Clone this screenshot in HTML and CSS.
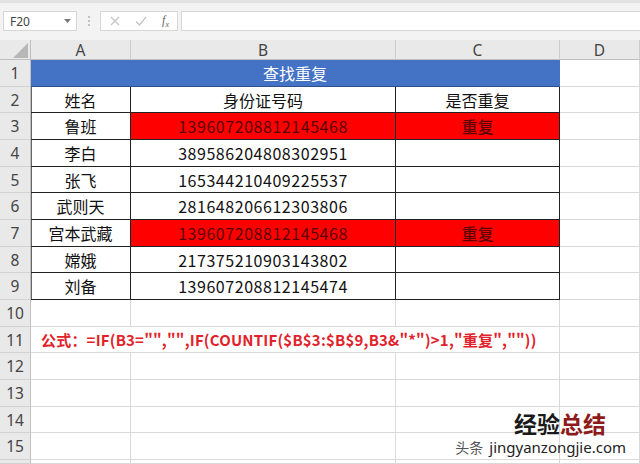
FILE: index.html
```
<!DOCTYPE html>
<html lang="zh-CN">
<head>
<meta charset="utf-8">
<title>查找重复</title>
<link rel="stylesheet" href="styles.css">
</head>
<body>
<div class="app">
  <div class="topstrip"></div>
  <div class="toolbar">
    <div class="namebox"><span>F20</span><svg class="dd" width="7" height="4" viewBox="0 0 7 4"><path d="M0 0H7L3.5 4Z" fill="#777"/></svg></div>
    <div class="grip"><i></i><i></i><i></i></div>
    <div class="fbtns">
      <svg width="10" height="10" viewBox="0 0 10 10"><path d="M1 1L9 9M9 1L1 9" stroke="#c4c4c4" stroke-width="1.2" fill="none"/></svg>
      <svg width="12" height="10" viewBox="0 0 12 10"><path d="M1 5.5L4.5 9L11 1" stroke="#c4c4c4" stroke-width="1.2" fill="none"/></svg>
      <span class="fx">f<sub>x</sub></span>
    </div>
    <div class="finput"></div>
  </div>
  <div class="sheet">
    <div class="corner"><svg width="31" height="20" viewBox="0 0 31 20"><path d="M28 3V18H13Z" fill="#b7b7b7"/></svg></div>
    <div class="ch">A</div><div class="ch">B</div><div class="ch">C</div><div class="ch">D</div>

    <div class="rh">1</div><div class="c title">查找重复</div><div class="c"></div>

    <div class="rh">2</div><div class="c t ta">姓名</div><div class="c t">身份证号码</div><div class="c t">是否重复</div><div class="c"></div>
    <div class="rh">3</div><div class="c t ta">鲁班</div><div class="c t num dup">139607208812145468</div><div class="c t dup dupw">重复</div><div class="c"></div>
    <div class="rh">4</div><div class="c t ta">李白</div><div class="c t num">389586204808302951</div><div class="c t"></div><div class="c"></div>
    <div class="rh">5</div><div class="c t ta">张飞</div><div class="c t num">165344210409225537</div><div class="c t"></div><div class="c"></div>
    <div class="rh">6</div><div class="c t ta">武则天</div><div class="c t num">281648206612303806</div><div class="c t"></div><div class="c"></div>
    <div class="rh">7</div><div class="c t ta">宫本武藏</div><div class="c t num dup">139607208812145468</div><div class="c t dup dupw">重复</div><div class="c"></div>
    <div class="rh">8</div><div class="c t ta">嫦娥</div><div class="c t num">217375210903143802</div><div class="c t"></div><div class="c"></div>
    <div class="rh">9</div><div class="c t ta">刘备</div><div class="c t num">139607208812145474</div><div class="c t"></div><div class="c"></div>

    <div class="rh">10</div><div class="c"></div><div class="c"></div><div class="c"></div><div class="c"></div>
    <div class="rh">11</div><div class="c formula">公式：=IF(B3="","",IF(COUNTIF($B$3:$B$9,B3&amp;"*")&gt;1,"重复",""))</div><div class="c"></div>
    <div class="rh">12</div><div class="c"></div><div class="c"></div><div class="c"></div><div class="c"></div>
    <div class="rh">13</div><div class="c"></div><div class="c"></div><div class="c"></div><div class="c"></div>
    <div class="rh">14</div><div class="c"></div><div class="c"></div><div class="c"></div><div class="c"></div>
    <div class="rh">15</div><div class="c"></div><div class="c"></div><div class="c"></div><div class="c"></div>
    <div class="rh"></div><div class="c"></div><div class="c"></div><div class="c"></div><div class="c"></div>
  </div>
  <div class="wm">
    <div class="wm-title"><span class="k">经验</span><span class="r">总结</span></div>
    <div class="wm-url"><span class="tt">头条</span><span class="u">jingyanzongjie.com</span></div>
  </div>
</div>
</body>
</html>
```
FILE: styles.css
```
html, body {
  margin: 0;
  padding: 0;
}
body {
  width: 640px;
  height: 464px;
  overflow: hidden;
  background: #fff;
  font-family: "Noto Sans CJK SC", "Noto Sans", sans-serif;
}
.app {
  position: relative;
  width: 640px;
  height: 464px;
  overflow: hidden;
}
.topstrip {
  height: 3px;
  background: #e2e2e2;
}
.toolbar {
  height: 37px;
  box-sizing: border-box;
  padding-top: 8px;
  background: #f3f3f3;
  display: flex;
  align-items: flex-start;
}
.namebox {
  margin-left: 3px;
  width: 74px;
  height: 20px;
  box-sizing: border-box;
  background: #fff;
  border: 1px solid #d6d6d6;
  display: flex;
  align-items: center;
  justify-content: space-between;
  padding: 0 5px 0 6px;
  font: 12px "Noto Sans", sans-serif;
  color: #444;
}
.grip {
  width: 23px;
  height: 20px;
  display: flex;
  flex-direction: column;
  align-items: center;
  justify-content: center;
  gap: 2px;
}
.grip i {
  width: 2px;
  height: 2px;
  background: #c2c2c2;
}
.fbtns {
  width: 78px;
  height: 20px;
  box-sizing: border-box;
  background: #fff;
  border: 1px solid #d6d6d6;
  display: flex;
  align-items: center;
  justify-content: space-between;
  padding: 0 8px 0 9px;
}
.fx {
  font: italic 12px "Liberation Serif", serif;
  color: #666;
}
.fx sub {
  font-size: 8px;
}
.finput {
  margin-left: 3px;
  flex: 1;
  height: 20px;
  box-sizing: border-box;
  background: #fff;
  border: 1px solid #d6d6d6;
  border-right: none;
}
.sheet {
  display: grid;
  grid-template-columns: 31px 100px 265px 164px 80px;
  grid-template-rows: 20px 27px 26px 27px 27px 26px 27px 27px 26px 27px 27px 26px 27px 27px 26px 27px 4px;
}
.corner {
  background: #e9e9e9;
  border-right: 1px solid #bfbfbf;
  border-bottom: 1px solid #bfbfbf;
  box-sizing: border-box;
  overflow: hidden;
}
.corner svg {
  display: block;
}
.ch, .rh {
  background: #e9e9e9;
  box-sizing: border-box;
  display: flex;
  align-items: center;
  justify-content: center;
  font: 15.5px "Noto Sans", sans-serif;
  color: #444;
}
.ch {
  border-right: 1px solid #cdcdcd;
  border-bottom: 1px solid #bfbfbf;
}
.rh {
  border-right: 1px solid #bfbfbf;
  border-bottom: 1px solid #d2d2d2;
}
.c {
  box-sizing: border-box;
  border-right: 1px solid #d9d9d9;
  border-bottom: 1px solid #d9d9d9;
  display: flex;
  align-items: center;
  justify-content: center;
  font-size: 16px;
  color: #111;
  white-space: nowrap;
  overflow: visible;
}
.title {
  grid-column: span 3;
  background: #4472c4;
  color: #fff;
  border-right-color: #4472c4;
  border-bottom-color: #2e4f8c;
}
.t {
  border-right-color: #222;
  border-bottom-color: #222;
}
.ta {
  box-shadow: inset 1px 0 0 #666;
}
.num {
  letter-spacing: 0.55px;
}
.dup {
  background: #fe0000;
  color: #5c0000;
}
.dupw {
  font-weight: 500;
}
.formula {
  grid-column: span 3;
  justify-content: flex-start;
  padding-left: 10px;
  font-size: 15px;
  font-weight: bold;
  letter-spacing: 0.2px;
  color: #e2222a;
}
.wm {
  position: absolute;
  left: 454px;
  top: 409px;
  display: flex;
  flex-direction: column;
  align-items: flex-end;
  width: 172px;
}
.wm-title {
  font-size: 23px;
  font-weight: bold;
  line-height: 28px;
  margin-right: 20px;
}
.wm-title .k {
  color: #1a1a1a;
}
.wm-title .r {
  color: #8e1b1b;
}
.wm-url {
  display: flex;
  align-items: baseline;
  line-height: 18px;
}
.wm-url .tt {
  font-size: 14px;
  color: #555;
  margin-right: 6px;
}
.wm-url .u {
  font: 15px "Noto Sans", sans-serif;
  color: #222;
  text-shadow: 0 0 2px #fff, 0 0 2px #fff;
}
```
